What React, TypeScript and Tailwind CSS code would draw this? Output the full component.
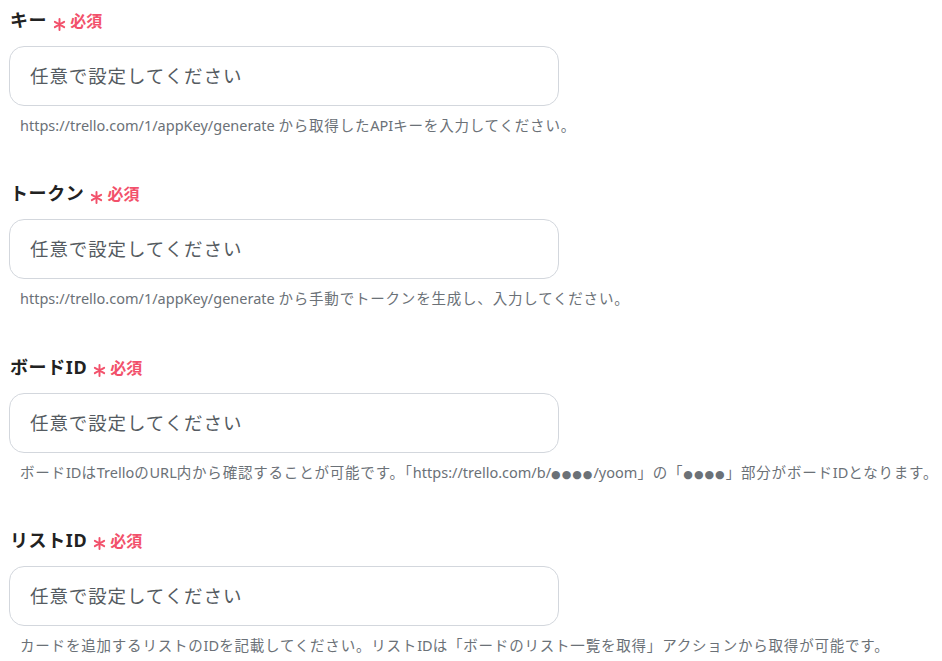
const fields = [
  {
    label: 'キー',
    help: 'https://trello.com/1/appKey/generate から取得したAPIキーを入力してください。',
  },
  {
    label: 'トークン',
    help: 'https://trello.com/1/appKey/generate から手動でトークンを生成し、入力してください。',
  },
  {
    label: 'ボードID',
    help: 'ボードIDはTrelloのURL内から確認することが可能です。「https://trello.com/b/●●●●/yoom」の「●●●●」部分がボードIDとなります。',
  },
  {
    label: 'リストID',
    help: 'カードを追加するリストのIDを記載してください。リストIDは「ボードのリスト一覧を取得」アクションから取得が可能です。',
  },
];

const font = { fontFamily: '"Noto Sans", "Noto Sans CJK JP", sans-serif' };

// split text into latin / japanese / dot runs so the japanese gets a little more room
function HelpText({ text }: { text: string }) {
  const parts = text.match(/[\u3000-\u30ff\u4e00-\u9fff\uff00-\uffef]+|●+|[^\u3000-\u30ff\u4e00-\u9fff\uff00-\uffef●]+/g) || [];
  return (
    <>
      {parts.map((p, i) => {
        if (p[0] === '●')
          return (
            <span key={i} className="text-[11px] tracking-[1px]" style={{ fontFamily: '"DejaVu Sans", sans-serif' }}>
              {p}
            </span>
          );
        if (/[\u3000-\u30ff\u4e00-\u9fff\uff00-\uffef]/.test(p))
          return (
            <span key={i} className="tracking-[0.8px]">
              {p}
            </span>
          );
        return <span key={i}>{p}</span>;
      })}
    </>
  );
}

function Asterisk() {
  return (
    <svg width="13" height="13" viewBox="0 0 12 12" className="ml-[6px] mr-[4px] mt-[8px]" stroke="#f2516b" strokeWidth="1.8" strokeLinecap="round">
      <path d="M6 1v10M1.7 3.5l8.6 5M1.7 8.5l8.6-5" />
    </svg>
  );
}

export default function App() {
  return (
    <div className="w-[942px] h-[661px] overflow-hidden bg-white pl-[9px] pt-[8px]" style={font}>
      <div className="flex flex-col gap-[46.3px]">
        {fields.map((f) => (
          <div key={f.label} className="flex flex-col">
            <div className="flex items-center h-[24px] pl-[1px]">
              <span className="text-[18px] font-bold text-[#222] leading-[24px] tracking-[0.6px]">{f.label}</span>
              <Asterisk />
              <span className="text-[16px] font-bold text-[#f2516b] leading-[24px] relative top-[1px]">必須</span>
            </div>
            <div className="mt-[14px] w-[550px] h-[60px] rounded-[15px] border border-[#d3d7dd] flex items-center pl-[20px]">
              <span className="text-[18.5px] tracking-[0.9px] text-[#555b61]">任意で設定してください</span>
            </div>
            <p className="mt-[9px] h-[20px] pl-[11px] text-[14.5px] leading-[20px] text-[#6b7177] whitespace-nowrap">
              <HelpText text={f.help} />
            </p>
          </div>
        ))}
      </div>
    </div>
  );
}
